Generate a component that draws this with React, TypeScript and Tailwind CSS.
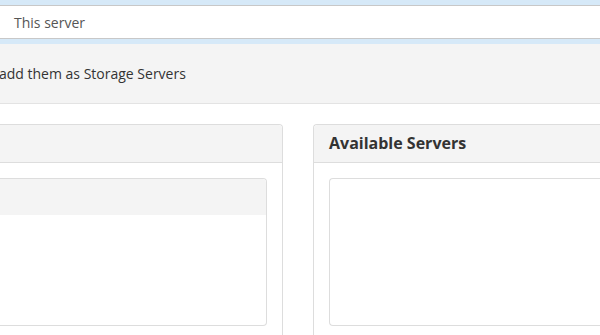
import React from "react";

const App: React.FC = () => {
  return (
    <div
      className="w-[600px] h-[335px] overflow-hidden bg-white text-[#333]"
      style={{ fontFamily: '"Open Sans", "Liberation Sans", sans-serif' }}
    >
      {/* Server selector band */}
      <div className="bg-[#d6e9f8] py-[5px]">
        <div className="h-[34px] bg-white border-y border-[#c8c8c8] flex items-center pl-[14px] text-[14px] text-[#555]">
          This server
        </div>
      </div>

      {/* Notice */}
      <div className="h-[60px] bg-[#f4f4f4] border-b border-[#e3e3e3] flex items-center text-[14px] text-[#333] pb-px">
        <span className="-ml-px">add them as Storage Servers</span>
      </div>

      {/* Panels */}
      <div className="flex gap-[30px] mt-[20px]">
        <div className="w-[283px] shrink-0 h-[240px] bg-white border border-l-0 border-[#ddd] rounded-tr-[4px]">
          <div className="h-[38px] bg-[#f4f4f4] border-b border-[#ddd] rounded-tr-[4px]" />
          <div className="pt-[15px] pr-[15px]">
            <div className="h-[148px] border border-l-0 border-[#ddd] rounded-r-[4px]">
              <div className="h-[36px] bg-[#f4f4f4] rounded-tr-[4px]" />
            </div>
          </div>
        </div>

        <div className="flex-1 h-[240px] bg-white border border-r-0 border-[#ddd] rounded-tl-[4px]">
          <div className="h-[38px] bg-[#f4f4f4] border-b border-[#ddd] rounded-tl-[4px] flex items-center pl-[15px] pb-px">
            <span className="text-[16px] font-bold text-[#333]">Available Servers</span>
          </div>
          <div className="pt-[15px] pl-[15px]">
            <div className="h-[148px] border border-r-0 border-[#ddd] rounded-l-[4px]" />
          </div>
        </div>
      </div>
    </div>
  );
};

export default App;
